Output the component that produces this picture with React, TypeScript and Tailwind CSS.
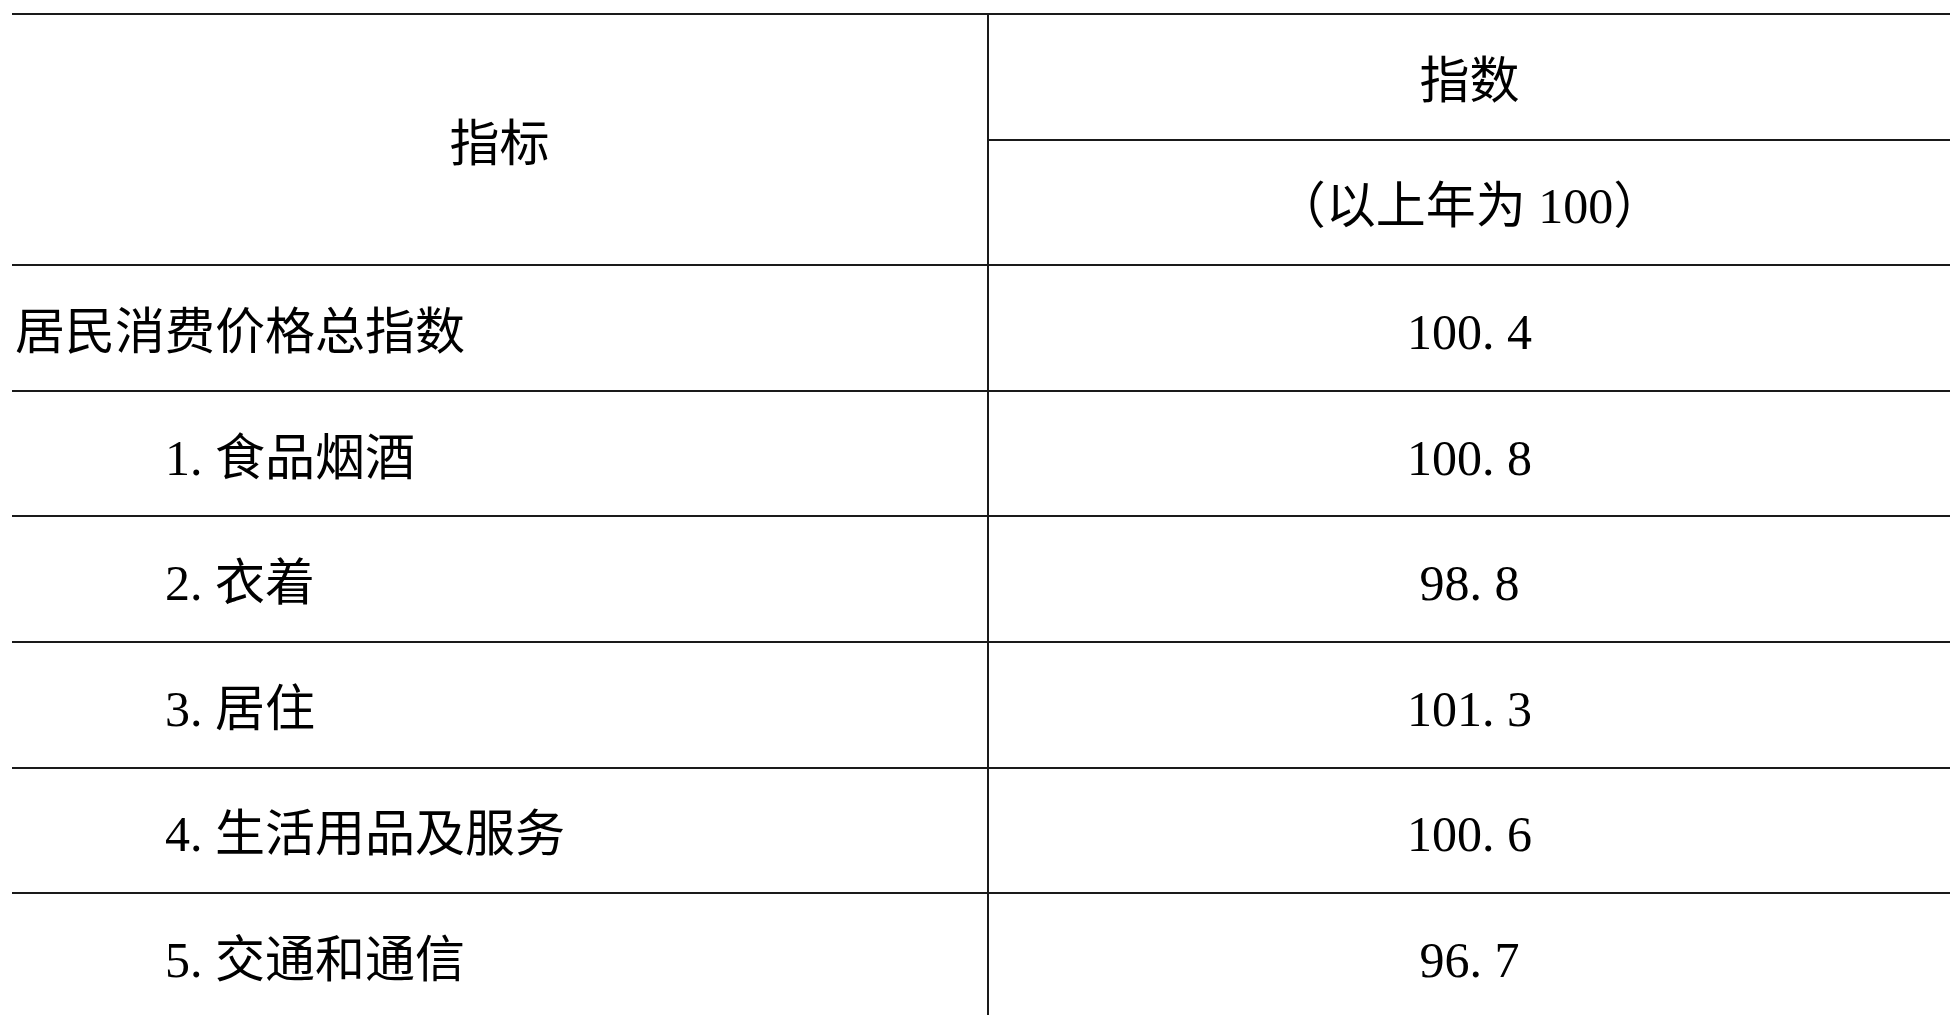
import React from "react";

const rows = [
  { label: "居民消费价格总指数", value: "100.4", indent: false },
  { label: "1.食品烟酒", value: "100.8", indent: true },
  { label: "2.衣着", value: "98.8", indent: true },
  { label: "3.居住", value: "101.3", indent: true },
  { label: "4.生活用品及服务", value: "100.6", indent: true },
  { label: "5.交通和通信", value: "96.7", indent: true },
];

// periods take a half-em cell, like in SimSun
const Txt = ({ text }: { text: string }) => {
  const parts = text.split(".");
  return (
    <span className="whitespace-nowrap">
      {parts.map((p, i) => (
        <React.Fragment key={i}>
          {i > 0 && <span className="inline-block w-[0.5em]">.</span>}
          {p}
        </React.Fragment>
      ))}
    </span>
  );
};

const App = () => {
  return (
    <div
      className="w-[1950px] h-[1015px] overflow-hidden bg-white pt-[13px] pl-[12px] text-black text-[50px] leading-none"
      style={{ fontFamily: '"Liberation Serif", "Noto Sans CJK SC", serif' }}
    >
      <div className="w-[1938px]">
        {/* header */}
        <div className="flex h-[251.2px] border-t-2 border-[#1a1a1a]">
          <div className="w-[975px] flex items-center justify-center pt-[8px]">指标</div>
          <div className="flex-1 flex flex-col border-l-2 border-[#1a1a1a]">
            <div className="h-[123.6px] flex items-center justify-center pt-[8px]">指数</div>
            <div className="flex-1 flex items-center justify-center border-t-2 border-[#1a1a1a] pt-[8px]">
              <span className="whitespace-pre">（以上年为 100）</span>
            </div>
          </div>
        </div>

        {rows.map((r) => (
          <div key={r.label} className="flex h-[125.6px] border-t-2 border-[#1a1a1a]">
            <div className={`w-[975px] flex items-center pt-[8px] ${r.indent ? "pl-[153px]" : "pl-[3px]"}`}>
              <Txt text={r.label} />
            </div>
            <div className="flex-1 flex items-center justify-center border-l-2 border-[#1a1a1a] pt-[8px]">
              <Txt text={r.value} />
            </div>
          </div>
        ))}
        <div className="h-[20px] border-t-2 border-[#1a1a1a] flex">
          <div className="w-[975px]" />
          <div className="flex-1 border-l-2 border-[#1a1a1a]" />
        </div>
      </div>
    </div>
  );
};

export default App;
